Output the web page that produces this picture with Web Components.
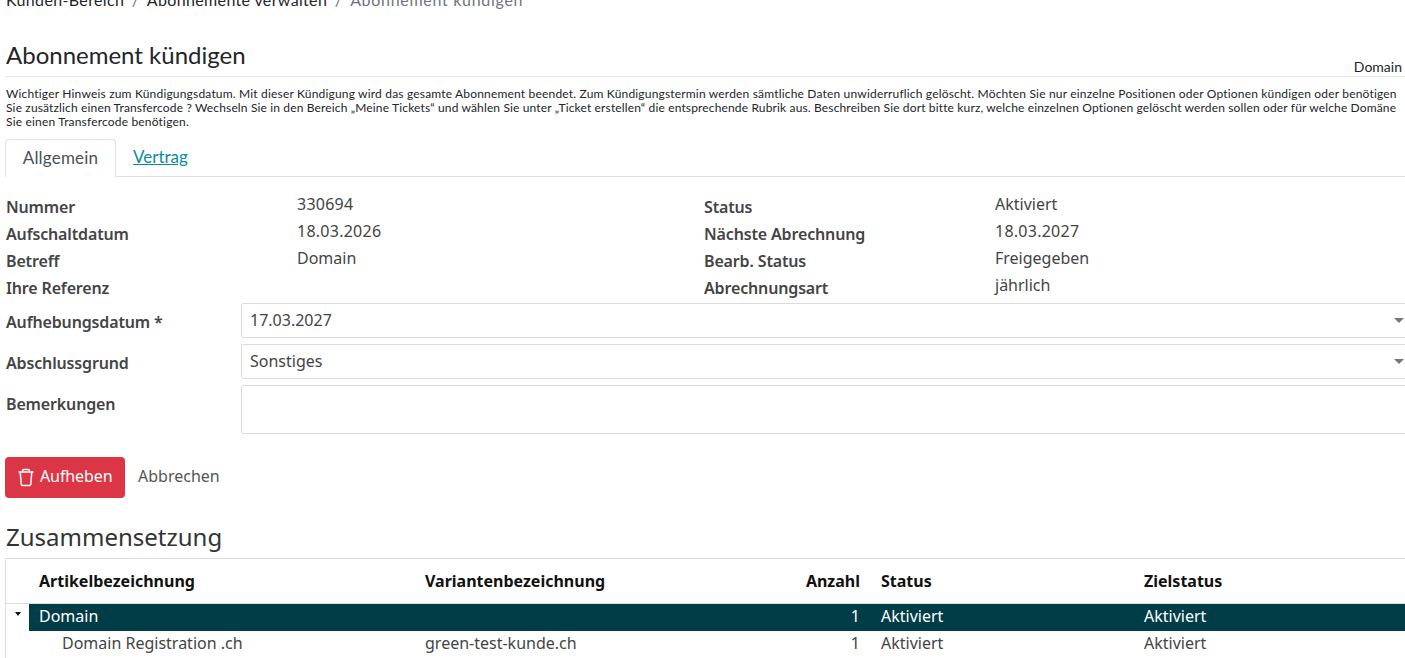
<!DOCTYPE html>
<html lang="de">
<head>
<meta charset="utf-8">
<title>Abonnement kündigen</title>
<style>
  html, body { margin: 0; padding: 0; background: #fff; overflow: hidden; height: 658px; }
  body { font-family: "Noto Sans", "Liberation Sans", sans-serif; font-size: 16px; color: #444; }
  #page { display: block; width: 1405px; overflow: hidden; }
</style>
</head>
<body>
<div id="page">
  <crumb-bar>
    <a>Kunden-Bereich</a><a>Abonnemente verwalten</a><a class="now">Abonnement kündigen</a>
  </crumb-bar>
  <page-title subject="Domain">Abonnement kündigen</page-title>
  <notice-text>
    <span>Wichtiger Hinweis zum Kündigungsdatum. Mit dieser Kündigung wird das gesamte Abonnement beendet. Zum Kündigungstermin werden sämtliche Daten unwiderruflich gelöscht. Möchten Sie nur einzelne Positionen oder Optionen kündigen oder benötigen</span>
    <span class="tight">Sie zusätzlich einen Transfercode ? Wechseln Sie in den Bereich „Meine Tickets“ und wählen Sie unter „Ticket erstellen“ die entsprechende Rubrik aus. Beschreiben Sie dort bitte kurz, welche einzelnen Optionen gelöscht werden sollen oder für welche Domäne</span>
    <span>Sie einen Transfercode benötigen.</span>
  </notice-text>
  <tab-bar active="Allgemein" other="Vertrag"></tab-bar>
  <info-grid>
    <info-item label="Nummer" value="330694"></info-item>
    <info-item label="Status" value="Aktiviert"></info-item>
    <info-item label="Aufschaltdatum" value="18.03.2026"></info-item>
    <info-item label="Nächste Abrechnung" value="18.03.2027"></info-item>
    <info-item label="Betreff" value="Domain"></info-item>
    <info-item label="Bearb. Status" value="Freigegeben"></info-item>
    <info-item label="Ihre Referenz" value=""></info-item>
    <info-item label="Abrechnungsart" value="jährlich"></info-item>
  </info-grid>
  <form-field label="Aufhebungsdatum *" value="17.03.2027" kind="select"></form-field>
  <form-field label="Abschlussgrund" value="Sonstiges" kind="select"></form-field>
  <form-field label="Bemerkungen" kind="area"></form-field>
  <action-bar></action-bar>
  <section-title>Zusammensetzung</section-title>
  <item-table></item-table>
</div>

<script>
// small helper so each element gets its open shadow root
function shadow(el, html) {
  const template = document.createElement('template');
  template.innerHTML = html;
  el.attachShadow({ mode: 'open' });
  el.shadowRoot.appendChild(template.content.cloneNode(true));
}

class CrumbBar extends HTMLElement {
  constructor() {
    super();
    shadow(this, `
      <style>
        :host { display: block; height: 9px; padding-left: 6px; overflow: hidden; font-family: "Lato", sans-serif; letter-spacing: .35px; }
        .in { margin-top: -11px; display: flex; line-height: 22px; color: #212529; white-space: nowrap; }
        ::slotted(a) { color: #212529; }
        ::slotted(a:not(:first-child))::before { content: "/"; color: #6c757d; padding: 0 7.5px; }
        ::slotted(a.now) { color: #6c757d; letter-spacing: .7px; }
      </style>
      <div class="in"><slot></slot></div>`);
  }
}
customElements.define('crumb-bar', CrumbBar);

class PageTitle extends HTMLElement {
  constructor() {
    super();
    shadow(this, `
      <style>
        :host { display: flex; justify-content: space-between; align-items: flex-end; margin: 31px 0 0 5px; padding-bottom: 1px; height: 35px; border-bottom: 1px solid #e4e6e9; }
        h1 { margin: 0 0 0 1px; font-family: "Lato", sans-serif; font-size: 24px; font-weight: 400; line-height: 30px; color: #212529; position: relative; top: -5px; }
        span { font-family: "Lato", sans-serif; font-size: 14px; line-height: 18px; color: #212529; margin-right: 3px; position: relative; top: 1px; }
      </style>
      <h1><slot></slot></h1><span></span>`);
    this.shadowRoot.querySelector('span').textContent = this.getAttribute('subject');
  }
}
customElements.define('page-title', PageTitle);

class NoticeText extends HTMLElement {
  constructor() {
    super();
    shadow(this, `
      <style>
        :host { display: block; margin: 10px 0 0 6px; font-family: "Lato", sans-serif; font-size: 12px; line-height: 14px; letter-spacing: .18px; color: #212529; white-space: nowrap; }
        ::slotted(span) { display: block; }
        ::slotted(span.tight) { letter-spacing: .145px; }
      </style>
      <slot></slot>`);
  }
}
customElements.define('notice-text', NoticeText);

class TabBar extends HTMLElement {
  constructor() {
    super();
    shadow(this, `
      <style>
        :host { display: flex; margin: 10px 0 0 5px; height: 37px; border-bottom: 1px solid #dee2e6; font-family: "Lato", sans-serif; font-size: 17px; }
        .on { box-sizing: border-box; width: 111px; height: 38px; border: 1px solid #dee2e6; border-bottom: 0; border-radius: 4px 4px 0 0; background: #fff; text-align: center; line-height: 36px; color: #495057; letter-spacing: .2px; }
        a { margin-left: 17px; line-height: 36px; color: #0a8aa5; text-decoration: underline; }
      </style>
      <div class="on"></div><a></a>`);
    this.shadowRoot.querySelector('.on').textContent = this.getAttribute('active');
    this.shadowRoot.querySelector('a').textContent = this.getAttribute('other');
  }
}
customElements.define('tab-bar', TabBar);

class InfoGrid extends HTMLElement {
  constructor() {
    super();
    shadow(this, `
      <style>
        :host { display: grid; grid-template-columns: 698px 1fr; grid-auto-rows: 27px; margin: 14px 0 4px 6px; }
      </style>
      <slot></slot>`);
  }
}
customElements.define('info-grid', InfoGrid);

class InfoItem extends HTMLElement {
  constructor() {
    super();
    shadow(this, `
      <style>
        :host { display: grid; grid-template-columns: 291px 1fr; line-height: 27px; }
        b { font-weight: 600; color: #444; padding-top: 3px; letter-spacing: -.15px; }
        span { color: #444; }
        span.digits { letter-spacing: .25px; }
      </style>
      <b></b><span></span>`);
    const value = this.getAttribute('value');
    const span = this.shadowRoot.querySelector('span');
    this.shadowRoot.querySelector('b').textContent = this.getAttribute('label');
    span.textContent = value;
    if (/^[\d.]+$/.test(value)) span.classList.add('digits');
  }
}
customElements.define('info-item', InfoItem);

class FormField extends HTMLElement {
  constructor() {
    super();
    const area = this.getAttribute('kind') === 'area';
    shadow(this, `
      <style>
        :host { display: grid; grid-template-columns: 235px 1180px; margin: 0 0 6px 6px; }
        b { font-weight: 600; color: #444; padding-top: 9px; line-height: 20px; letter-spacing: -.15px; }
        .box { position: relative; box-sizing: border-box; height: ${area ? 49 : 35}px; border: 1px solid #dcdcdc; border-radius: 2px; padding-left: 8px; line-height: 33px; color: #444; }
        .arrow { position: absolute; left: 1152px; top: 14px; width: 0; height: 0; border: 5px solid transparent; border-top: 5px solid #777; border-bottom: 0; }
      </style>
      <b></b><div class="box"><span></span>${area ? '' : '<i class="arrow"></i>'}</div>`);
    this.shadowRoot.querySelector('b').textContent = this.getAttribute('label');
    this.shadowRoot.querySelector('span').textContent = this.getAttribute('value') || '';
  }
}
customElements.define('form-field', FormField);

class ActionBar extends HTMLElement {
  constructor() {
    super();
    shadow(this, `
      <style>
        :host { display: flex; align-items: center; margin: 23px 0 0 5px; height: 41px; }
        button { box-sizing: border-box; display: flex; align-items: center; gap: 5px; width: 120px; height: 41px; padding: 0 0 4px 12px; border: 0; border-radius: 4px; background: #dc3545; color: #fff; font: inherit; letter-spacing: -.1px; }
        a { margin: 0 0 4px 13px; color: #555; }
        svg { display: block; margin-top: 3px; }
      </style>
      <button>
        <svg width="18" height="19" viewBox="0 0 18 19" fill="none" stroke="#fff" stroke-width="1.5" stroke-linejoin="round">
          <path d="M1.5 3.9h15M5.6 3.9V2.4c0-.6.4-1 1-1h4.8c.6 0 1 .4 1 1v1.5"/>
          <path d="M3.2 3.9l1 12.3c.1.8.6 1.3 1.4 1.3h6.8c.8 0 1.3-.5 1.4-1.3l1-12.3"/>
        </svg>
        Aufheben
      </button>
      <a>Abbrechen</a>`);
  }
}
customElements.define('action-bar', ActionBar);

class SectionTitle extends HTMLElement {
  constructor() {
    super();
    shadow(this, `
      <style>
        :host { display: block; margin: 24px 0 0 6px; font-size: 24px; line-height: 30px; color: #333; }
      </style>
      <slot></slot>`);
  }
}
customElements.define('section-title', SectionTitle);

class ItemTable extends HTMLElement {
  constructor() {
    super();
    const cols = 'grid-template-columns: 386px 340px 116px 263px 1fr;';
    shadow(this, `
      <style>
        :host { display: block; margin: 6px 0 0 5px; border-top: 1px solid #ddd; border-left: 1px solid #ddd; }
        .row { display: grid; ${cols} }
        .head { height: 44px; line-height: 44px; font-weight: 700; color: #111; padding-left: 33px; border-bottom: 1px solid #ddd; }
        .group { display: flex; height: 27px; }
        .tog { width: 23px; position: relative; }
        .tog i { position: absolute; left: 9px; top: 8px; width: 0; height: 0; border: 3px solid transparent; border-top: 4px solid #111; border-bottom: 0; }
        .dark { flex: 1; padding-left: 10px; background: #003d47; color: #fff; line-height: 25px; }
        .child { height: 27px; line-height: 25px; padding-left: 33px; color: #444; }
        .child > :first-child { padding-left: 23px; }
        .num { text-align: right; padding-right: 21px; }
      </style>
      <div class="row head"><span>Artikelbezeichnung</span><span>Variantenbezeichnung</span><span class="num">Anzahl</span><span>Status</span><span>Zielstatus</span></div>
      <div class="group"><div class="tog"><i></i></div>
        <div class="dark row"><span>Domain</span><span></span><span class="num">1</span><span>Aktiviert</span><span>Aktiviert</span></div>
      </div>
      <div class="row child"><span>Domain Registration .ch</span><span>green-test-kunde.ch</span><span class="num">1</span><span>Aktiviert</span><span>Aktiviert</span></div>`);
  }
}
customElements.define('item-table', ItemTable);
</script>
</body>
</html>
